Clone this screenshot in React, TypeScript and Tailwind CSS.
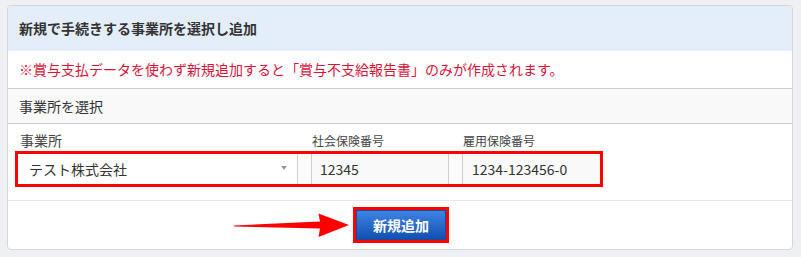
import React from "react";

export default function App() {
  return (
    <div
      className="min-h-[257px] bg-[#eef0f3] pt-[5px] pl-[7px] pr-[8px] pb-[7px]"
      style={{ fontFamily: '"Noto Sans CJK JP", "Noto Sans", sans-serif' }}
    >
      <div className="rounded-[4px] border border-[#d3d6db] bg-white overflow-hidden">
        <div className="h-[45px] bg-[#e4eefb] flex items-center px-[11px] font-bold text-[14px] text-[#333]">
          新規で手続きする事業所を選択し追加
        </div>
        <div className="h-[38px] flex items-center px-[11px] text-[14px] text-[#d7153a] border-b border-[#cfcfcf]">
          ※賞与支払データを使わず新規追加すると「賞与不支給報告書」のみが作成されます。
        </div>
        <div className="h-[35px] bg-[#f9f9f9] flex items-center px-[11px] text-[14px] text-[#333] border-b border-[#cfcfcf]">
          事業所を選択
        </div>
        <div className="pl-[7px] pt-[6px] pb-[13px] border-b border-[#e8e8e8]">
          <div className="flex h-[21px] items-center pl-[3px] text-[#444]">
            <div className="w-[280px] pl-[2px] text-[14px]">事業所</div>
            <div className="w-[13px]" />
            <div className="w-[138px] pl-[1px] text-[12px]">社会保険番号</div>
            <div className="w-[13px]" />
            <div className="w-[138px] pl-[1px] text-[12px]">雇用保険番号</div>
          </div>
          <div className="inline-flex h-[36px] border-[3px] border-[#ff0000]">
            <div className="w-[280px] bg-white border-r border-[#cfcfcf] flex items-center justify-between pl-[11px] pr-[10px] text-[14px] text-[#333]">
              <span>テスト株式会社</span>
              <span className="w-0 h-0 border-l-[3px] border-r-[3px] border-t-[4px] border-l-transparent border-r-transparent border-t-[#999] -mt-[3px]" />
            </div>
            <div className="w-[13px] bg-[#fbfbfb]" />
            <div className="w-[138px] bg-[#f9f9f9] border-x border-[#cfcfcf] flex items-center pl-[8px] text-[14px] text-[#333]">
              12345
            </div>
            <div className="w-[13px] bg-[#fbfbfb]" />
            <div className="w-[138px] bg-[#f9f9f9] border-l border-[#cfcfcf] flex items-center pl-[9px] text-[14px] text-[#333]">
              1234-123456-0
            </div>
          </div>
        </div>
        <div className="h-[48px] flex items-center justify-center">
          <div className="relative ml-[2px]">
            <svg
              className="absolute right-full mr-[3px] top-1/2 -translate-y-1/2"
              width="116"
              height="28"
              viewBox="0 0 116 28"
            >
              <path d="M0,14.5 L86,10.5 L84.5,2.5 L115,14 L84.5,26 L86,17.5 L0,15.5 Z" fill="#ff0000" />
            </svg>
            <div className="border-[3px] border-[#ff0000]">
              <button className="w-[90px] h-[30px] flex items-center justify-center border border-[#1a4c9e] bg-gradient-to-b from-[#3f83e4] to-[#1150b0] text-white font-bold text-[14px]">
                新規追加
              </button>
            </div>
          </div>
        </div>
      </div>
    </div>
  );
}
